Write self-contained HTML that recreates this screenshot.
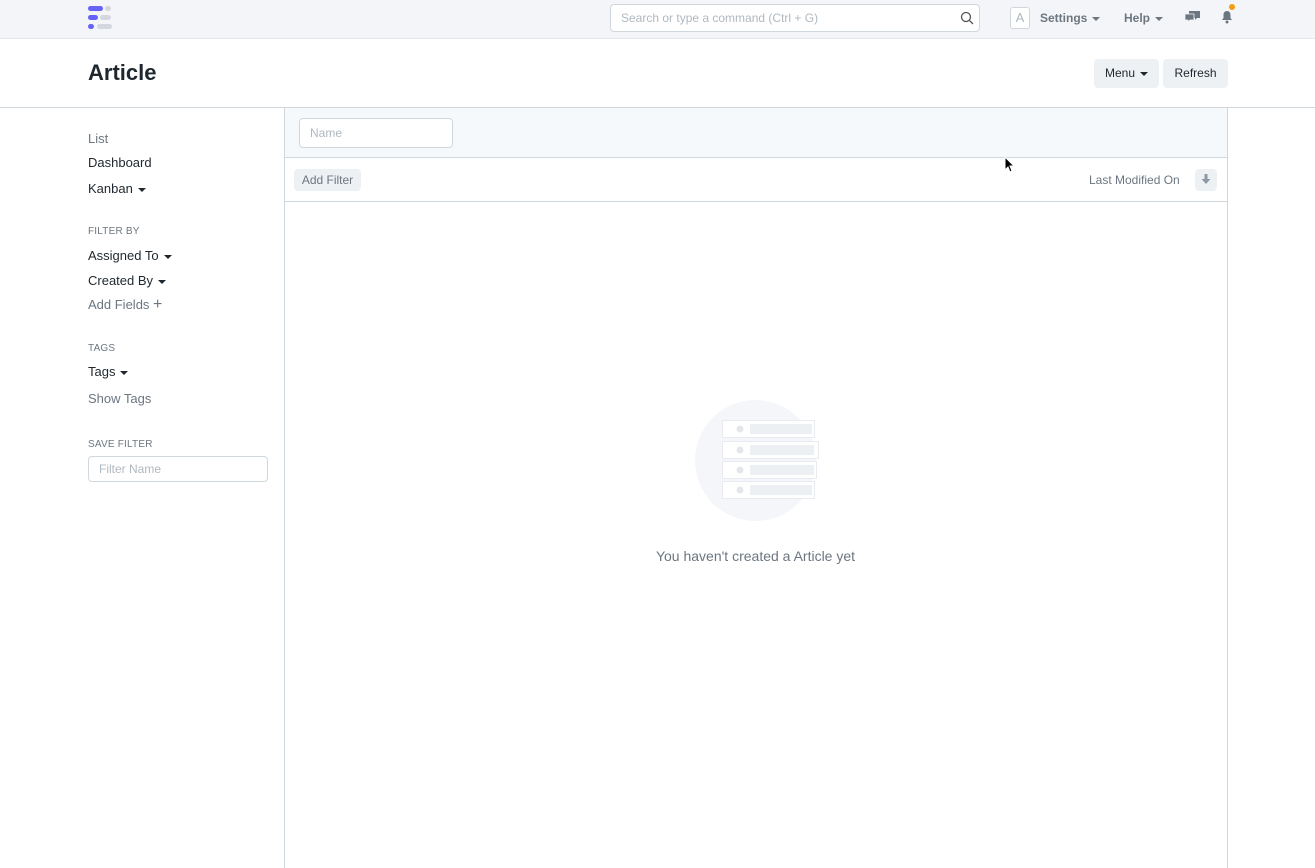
<!DOCTYPE html>
<html><head><meta charset="utf-8"><style>
*{box-sizing:border-box;margin:0;padding:0}
body{width:1315px;height:860px;overflow:hidden;background:#fff;font-family:"Liberation Sans",sans-serif;color:#1f272e;position:relative}
.a{position:absolute}
.nav{left:0;top:0;width:1315px;height:39px;background:#f4f5f8;border-bottom:1px solid #e2e6e9}
.caret{display:inline-block;width:0;height:0;border-left:4px solid transparent;border-right:4px solid transparent;border-top:4px solid currentColor;vertical-align:middle;margin-left:5px}
.side{font-size:13px;color:#1f272e}
.lbl{font-size:10px;color:#6c7680;letter-spacing:.2px}
.btn{background:#eef1f4;border-radius:4px;font-size:12px;color:#1f272e;text-align:center}
</style></head><body>
<div class="a nav"></div>
<div class="a" style="left:88px;top:6px;width:15px;height:5px;border-radius:3px;background:#6563f6"></div>
<div class="a" style="left:105px;top:6px;width:6px;height:5px;border-radius:3px;background:#d4d8de"></div>
<div class="a" style="left:88px;top:15px;width:10px;height:5px;border-radius:3px;background:#6563f6"></div>
<div class="a" style="left:100px;top:15px;width:11px;height:5px;border-radius:3px;background:#d4d8de"></div>
<div class="a" style="left:88px;top:24px;width:6px;height:5px;border-radius:3px;background:#6563f6"></div>
<div class="a" style="left:97px;top:24px;width:15px;height:5px;border-radius:3px;background:#d4d8de"></div>
<div class="a" style="left:610px;top:4px;width:370px;height:28px;border:1px solid #d1d8dd;border-radius:4px;background:#fff;font-size:12px;color:#b0b8c0;padding:6px 10px">Search or type a command (Ctrl + G)</div>
<svg class="a" style="left:960px;top:11px" width="14" height="14" viewBox="0 0 14 14"><circle cx="6" cy="6" r="4.5" fill="none" stroke="#555" stroke-width="1.3"/><path d="M9.3 9.3L13 13" stroke="#555" stroke-width="1.3"/></svg>
<div class="a" style="left:1010px;top:7px;width:20px;height:22px;border:1px solid #d1d8dd;border-radius:3px;background:#fff;font-size:13px;color:#b0b8c0;text-align:center;line-height:20px">A</div>
<div class="a" style="left:1040px;top:11px;font-size:12px;font-weight:bold;color:#6c7680">Settings<span class="caret"></span></div>
<div class="a" style="left:1124px;top:11px;font-size:12px;font-weight:bold;color:#6c7680">Help<span class="caret"></span></div>
<svg class="a" style="left:1185px;top:11px" width="15" height="12" viewBox="0 0 15 12"><path d="M4 0h11v7h-3l-2 2V7H4z" fill="#6c7680"/><path d="M0 3h9v6H5l-2 2V9H0z" fill="#6c7680" stroke="#f4f5f8" stroke-width=".8"/></svg>
<svg class="a" style="left:1221px;top:10px" width="12" height="14" viewBox="0 0 12 14"><path d="M6 1C3.5 1 2.5 3 2.5 5v3L1 10h10L9.5 8V5C9.5 3 8.5 1 6 1z" fill="#6c7680"/><circle cx="6" cy="12" r="1.5" fill="#6c7680"/></svg>
<div class="a" style="left:1229px;top:4px;width:6px;height:6px;border-radius:3px;background:#f39c12"></div>

<div class="a" style="left:88px;top:60px;font-size:22px;font-weight:bold;color:#1f272e">Article</div>
<div class="a btn" style="left:1094px;top:59px;width:65px;height:29px;line-height:29px">Menu<span class="caret"></span></div>
<div class="a btn" style="left:1163px;top:59px;width:65px;height:29px;line-height:29px">Refresh</div>
<div class="a" style="left:0;top:107px;width:1315px;height:1px;background:#d1d8dd"></div>

<div class="a side" style="left:88px;top:131px;color:#6c7680">List</div>
<div class="a side" style="left:88px;top:155px">Dashboard</div>
<div class="a side" style="left:88px;top:181px">Kanban<span class="caret"></span></div>
<div class="a lbl" style="left:88px;top:226px">FILTER BY</div>
<div class="a side" style="left:88px;top:248px">Assigned To<span class="caret"></span></div>
<div class="a side" style="left:88px;top:273px">Created By<span class="caret"></span></div>
<div class="a side" style="left:88px;top:297px;color:#6c7680">Add Fields <span style="font-size:16px;line-height:10px">+</span></div>
<div class="a lbl" style="left:88px;top:343px">TAGS</div>
<div class="a side" style="left:88px;top:364px">Tags<span class="caret"></span></div>
<div class="a side" style="left:88px;top:391px;color:#6c7680">Show Tags</div>
<div class="a lbl" style="left:88px;top:439px">SAVE FILTER</div>
<div class="a" style="left:88px;top:456px;width:180px;height:26px;border:1px solid #d1d8dd;border-radius:4px;font-size:12px;color:#b0b8c0;padding:5px 10px">Filter Name</div>

<div class="a" style="left:284px;top:108px;width:944px;height:760px;border-left:1px solid #d1d8dd;border-right:1px solid #d1d8dd"></div>
<div class="a" style="left:285px;top:108px;width:942px;height:50px;background:#f6f9fc;border-bottom:1px solid #d1d8dd"></div>
<div class="a" style="left:299px;top:118px;width:154px;height:30px;border:1px solid #d1d8dd;border-radius:4px;background:#fff;font-size:12px;color:#b0b8c0;padding:7px 10px">Name</div>
<div class="a btn" style="left:294px;top:169px;width:67px;height:22px;line-height:22px;color:#6c7680">Add Filter</div>
<div class="a" style="left:1089px;top:173px;font-size:12px;color:#6c7680">Last Modified On</div>
<div class="a btn" style="left:1195px;top:169px;width:22px;height:22px"></div>
<svg class="a" style="left:1201px;top:174px" width="10" height="11" viewBox="0 0 10 11"><path d="M3.5 0h3v5h3L5 10 .5 5h3z" fill="#8d99a6"/></svg>
<div class="a" style="left:285px;top:201px;width:942px;height:1px;background:#d1d8dd"></div>

<div class="a" style="left:695px;top:400px;width:121px;height:121px;border-radius:50%;background:#f4f6f9"></div>
<svg class="a" style="left:720px;top:418px" width="100" height="86" viewBox="0 0 100 86">
<g fill="#fff" stroke="#e8ecf0" stroke-width="1">
<rect x="2.5" y="2.5" width="92" height="17"/><rect x="2.5" y="23.5" width="96" height="17"/><rect x="2.5" y="43.5" width="94" height="17"/><rect x="2.5" y="63.5" width="92" height="17"/></g>
<g fill="#edf0f3"><rect x="30" y="6" width="62" height="10"/><rect x="30" y="27" width="64" height="10"/><rect x="30" y="47" width="64" height="10"/><rect x="30" y="67" width="62" height="10"/></g>
<g fill="#e3e7eb"><circle cx="20" cy="11" r="3.5"/><circle cx="20" cy="32" r="3.5"/><circle cx="20" cy="52" r="3.5"/><circle cx="20" cy="72" r="3.5"/></g>
</svg>
<div class="a" style="left:585px;top:548px;width:341px;text-align:center;font-size:14px;color:#6c7680">You haven't created a Article yet</div>
<svg class="a" style="left:1004px;top:156px" width="11" height="17" viewBox="0 0 11 17"><path d="M1 1v13l3-3 2 5 2-1-2-5h4z" fill="#000" stroke="#fff" stroke-width="1"/></svg>
</body></html>
